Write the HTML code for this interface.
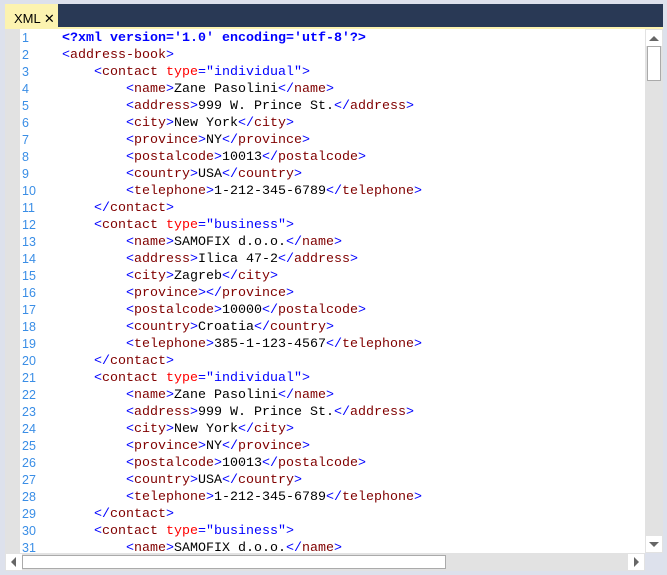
<!DOCTYPE html>
<html><head><style>
*{margin:0;padding:0;box-sizing:border-box}
body{width:667px;height:575px;background:#dde1ec;position:relative;overflow:hidden;font-family:"Liberation Sans",sans-serif}
#bar{position:absolute;left:5px;top:4px;width:658px;height:24px;background:#293955}
#tab{position:absolute;left:5px;top:4px;width:53px;height:24px;background:#fcf3b0;font-size:13px;color:#000;padding:7px 0 0 9px}
#yl{position:absolute;left:5px;top:27px;width:658px;height:2px;background:#fcf3b0}
#ed{position:absolute;left:5px;top:29px;width:640px;height:524px;background:#fff;overflow:hidden}
#gut{position:absolute;left:0;top:0;width:15px;height:524px;background:#e2e2e2}
#lines{position:absolute;left:0;top:1px;width:640px;height:524px}
.l{position:absolute;left:0;height:17px;line-height:17px;white-space:pre;font-family:"Liberation Mono",monospace;font-size:13.33px}
.n{position:absolute;left:17px;font-family:"Liberation Sans",sans-serif;font-size:12.5px;color:#3a8ee6}
.c{position:absolute;left:57px}
.t{color:#0000ff}.g{color:#800000}.a{color:#ff0000}.v{color:#0000ff}.k{color:#000}
.d{color:#0000ff;font-weight:bold}
#vs{position:absolute;left:645px;top:29px;width:18px;height:524px;background:#e2e2e2}
#hs{position:absolute;left:5px;top:553px;width:640px;height:18px;background:#e2e2e2}
.btn{position:absolute;background:#fff;width:16px;height:16px}
</style></head><body>
<div id="bar"></div>
<div id="tab">XML ✕</div>
<div id="yl"></div>
<div id="ed"><div id="gut"></div>
<div id="lines"></div>
</div>
<div id="vs">
<div class="btn" style="left:1px;top:1px"><svg width="16" height="16"><path d="M3 11h10L8 6z" fill="#666"/></svg></div>
<div style="position:absolute;left:2px;top:17px;width:14px;height:35px;border:1px solid #aaa;background:#fff"></div>
<div class="btn" style="left:1px;top:507px"><svg width="16" height="16"><path d="M3 6h10L8 11z" fill="#666"/></svg></div>
</div>
<div id="hs">
<div class="btn" style="left:1px;top:1px"><svg width="16" height="16"><path d="M10 3v10L5 8z" fill="#666"/></svg></div>
<div style="position:absolute;left:17px;top:2px;width:424px;height:14px;border:1px solid #aaa;background:#fff"></div>
<div class="btn" style="left:623px;top:1px"><svg width="16" height="16"><path d="M6 3v10L11 8z" fill="#666"/></svg></div>
</div>
<script>
var L=[
"D<?xml version='1.0' encoding='utf-8'?>",
"0O address-book",
"4C individual",
"8E name|Zane Pasolini","8E address|999 W. Prince St.","8E city|New York","8E province|NY","8E postalcode|10013","8E country|USA","8E telephone|1-212-345-6789",
"4X contact",
"4C business",
"8E name|SAMOFIX d.o.o.","8E address|Ilica 47-2","8E city|Zagreb","8E province|","8E postalcode|10000","8E country|Croatia","8E telephone|385-1-123-4567",
"4X contact",
"4C individual",
"8E name|Zane Pasolini","8E address|999 W. Prince St.","8E city|New York","8E province|NY","8E postalcode|10013","8E country|USA","8E telephone|1-212-345-6789",
"4X contact",
"4C business",
"8E name|SAMOFIX d.o.o."];
function e(s){return s.replace(/&/g,'&amp;').replace(/</g,'&lt;').replace(/>/g,'&gt;')}
var h='';
L.forEach(function(s,i){
 var c,ty=s[1],ind=' '.repeat(+s[0]),r=s.slice(3);
 if(s[0]=='D'){c='<span class="d">'+e(s.slice(1))+'</span>';ind='';}
 else if(ty=='O')c='<span class="t">&lt;</span><span class="g">'+r+'</span><span class="t">&gt;</span>';
 else if(ty=='X')c='<span class="t">&lt;/</span><span class="g">'+r+'</span><span class="t">&gt;</span>';
 else if(ty=='C')c='<span class="t">&lt;</span><span class="g">contact</span> <span class="a">type</span><span class="t">="'+r+'"&gt;</span>';
 else{var p=r.split('|');c='<span class="t">&lt;</span><span class="g">'+p[0]+'</span><span class="t">&gt;</span><span class="k">'+e(p[1])+'</span><span class="t">&lt;/</span><span class="g">'+p[0]+'</span><span class="t">&gt;</span>';}
 h+='<div class="l" style="top:'+(17*i)+'px"><span class="n">'+(i+1)+'</span><span class="c">'+ind+c+'</span></div>';
});
document.getElementById('lines').innerHTML=h;
</script>
</body></html>
